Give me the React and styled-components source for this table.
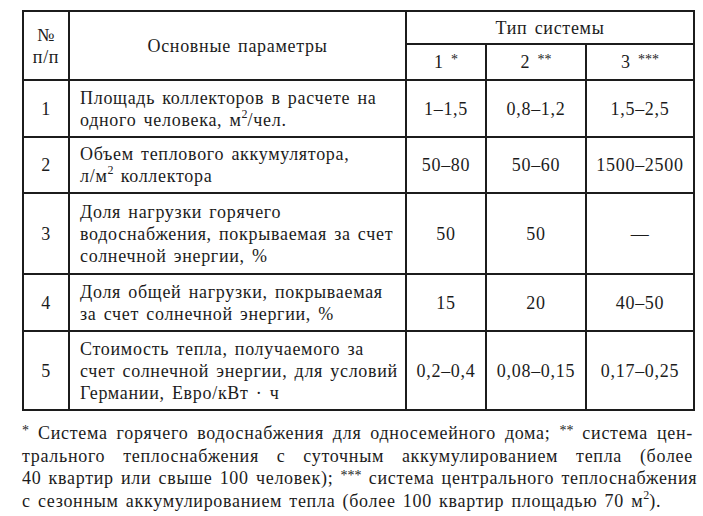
import React from 'react'
import styled, { createGlobalStyle } from 'styled-components'

const Global = createGlobalStyle`
	body {
		margin: 0;
		background: #fff;
		color: #1c1c1c;
		font-family: "Liberation Serif", "DejaVu Serif", serif;
	}
`

const Page = styled.div`
	width: 703px;
	height: 516px;
	padding: 10px 0 0 22px;
	box-sizing: border-box;
`

const Table = styled.table`
	border-collapse: collapse;
	table-layout: fixed;
	width: 671px;
	font-size: 18px;
	line-height: 22px;
	letter-spacing: 0.7px;
	word-spacing: 2px;
`

const Cell = styled.td`
	border: 2px solid #1c1c1c;
	padding: 0 ${props => props.left ? '10px' : '0'};
	text-align: ${props => props.left ? 'left' : 'center'};
	vertical-align: middle;
	white-space: nowrap;
`

const Row = styled.tr`
	height: ${props => props.h}px;
`

const Sup = styled.sup`
	font-size: ${props => props.star ? '14px' : '12px'};
	line-height: 0;
	vertical-align: ${props => props.star ? '4px' : '8px'};
	letter-spacing: 0;
`

const Notes = styled.div`
	width: 671px;
	margin-top: 11px;
	font-size: 18px;
	line-height: 22.5px;
	letter-spacing: 0.7px;
	word-spacing: 2px;
`

const NoteLine = styled.div`
	text-align: ${props => props.last ? 'left' : 'justify'};
	text-align-last: ${props => props.last ? 'left' : 'justify'};
	white-space: nowrap;
`

const rows = [
	{ n: '1', h: 57, text: [<>Площадь коллекторов в расчете на</>, <>одного человека, м<Sup>2</Sup>/чел.</>], v: ['1–1,5', '0,8–1,2', '1,5–2,5'] },
	{ n: '2', h: 56, text: [<>Объем теплового аккумулятора,</>, <>л/м<Sup>2</Sup> коллектора</>], v: ['50–80', '50–60', '1500–2500'] },
	{ n: '3', h: 81, text: ['Доля нагрузки горячего', 'водоснабжения, покрываемая за счет', 'солнечной энергии, %'], v: ['50', '50', '—'] },
	{ n: '4', h: 57, text: ['Доля общей нагрузки, покрываемая', 'за счет солнечной энергии, %'], v: ['15', '20', '40–50'] },
	{ n: '5', h: 79, text: ['Стоимость тепла, получаемого за', 'счет солнечной энергии, для условий', 'Германии, Евро/кВт · ч'], v: ['0,2–0,4', '0,08–0,15', '0,17–0,25'] },
]

const App = () => (
	<Page>
		<Global />
		<Table>
			<colgroup>
				<col style={{ width: 46 }} />
				<col style={{ width: 337 }} />
				<col style={{ width: 80 }} />
				<col style={{ width: 100 }} />
				<col style={{ width: 108 }} />
			</colgroup>
			<tbody>
				<Row h={33}>
					<Cell rowSpan={2}>№<br />п/п</Cell>
					<Cell rowSpan={2}>Основные параметры</Cell>
					<Cell colSpan={3}>Тип системы</Cell>
				</Row>
				<Row h={36}>
					<Cell>1 <Sup star>*</Sup></Cell>
					<Cell>2 <Sup star>**</Sup></Cell>
					<Cell>3 <Sup star>***</Sup></Cell>
				</Row>
				{rows.map(row => (
					<Row h={row.h} key={row.n}>
						<Cell>{row.n}</Cell>
						<Cell left>
							{row.text.map((line, i) => (
								<div key={i}>{line}</div>
							))}
						</Cell>
						{row.v.map((val, i) => (
							<Cell key={i}>{val}</Cell>
						))}
					</Row>
				))}
			</tbody>
		</Table>
		<Notes>
			<NoteLine><Sup star>*</Sup> Система горячего водоснабжения для односемейного дома; <Sup star>**</Sup> система цен-</NoteLine>
			<NoteLine>трального теплоснабжения с суточным аккумулированием тепла (более</NoteLine>
			<NoteLine>40 квартир или свыше 100 человек); <Sup star>***</Sup> система центрального теплоснабжения</NoteLine>
			<NoteLine last>с сезонным аккумулированием тепла (более 100 квартир площадью 70 м<Sup>2</Sup>).</NoteLine>
		</Notes>
	</Page>
)

export default App
